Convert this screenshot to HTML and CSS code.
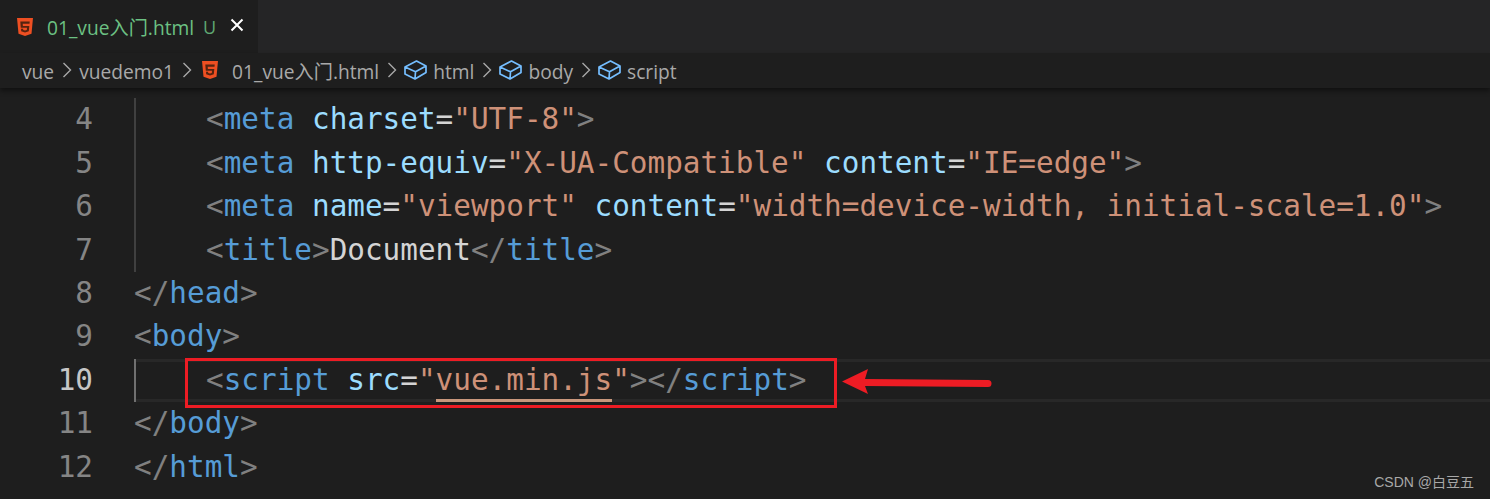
FILE: index.html
```html
<!DOCTYPE html>
<html lang="zh">
<head>
<meta charset="utf-8">
<title>01_vue入门.html</title>
<link rel="stylesheet" href="styles.css">
</head>
<body>
<svg class="defs" width="0" height="0" aria-hidden="true">
  <symbol id="h5" viewBox="0 0 16 18">
    <path d="M0 0h16l-1.500 15.800L8 18l-6.500-2.200z" fill="#ee4f22"/>
    <path d="M3.300 3.500h9.400l-.2 2.300H5.700l.2 2.300h6.400l-.5 5.200L8 14.500l-3.800-1.200-.2-2.600h2.100l.1 1.200 1.800.5 1.800-.5.2-2.100H3.800z" fill="#55230f"/>
  </symbol>
  <symbol id="cube" viewBox="0 0 23 20">
    <path d="M1 7 12.500 1 22 6v6.500L11 19 1 14zM1 7l10.500 4.800L22 6M11.500 11.800 11 19" fill="none" stroke="#75beff" stroke-width="1.700" stroke-linejoin="round"/>
  </symbol>
</svg>
<div class="tabbar">
  <div class="tab">
    <svg class="h5"><use href="#h5"/></svg>
    <span class="tab-name">01_vue入门.html</span>
    <span class="tab-status">U</span>
    <svg class="tab-close" viewBox="0 0 14 14"><path d="M1.500 1.500l11 11M12.500 1.500l-11 11" stroke="#fff" stroke-width="2" fill="none"/></svg>
  </div>
</div>
<nav class="crumbs">
  <span>vue</span>
  <svg class="chev" viewBox="0 0 10 16"><path d="M1.500 1l7 7-7 7" fill="none" stroke="#a8a8a8" stroke-width="1.400"/></svg>
  <span>vuedemo1</span>
  <svg class="chev" viewBox="0 0 10 16"><path d="M1.500 1l7 7-7 7" fill="none" stroke="#a8a8a8" stroke-width="1.400"/></svg>
  <svg class="h5 crumb-h5"><use href="#h5"/></svg>
  <span class="crumb-file">01_vue入门.html</span>
  <svg class="chev" viewBox="0 0 10 16"><path d="M1.500 1l7 7-7 7" fill="none" stroke="#a8a8a8" stroke-width="1.400"/></svg>
  <svg class="cube"><use href="#cube"/></svg>
  <span>html</span>
  <svg class="chev" viewBox="0 0 10 16"><path d="M1.500 1l7 7-7 7" fill="none" stroke="#a8a8a8" stroke-width="1.400"/></svg>
  <svg class="cube"><use href="#cube"/></svg>
  <span>body</span>
  <svg class="chev" viewBox="0 0 10 16"><path d="M1.500 1l7 7-7 7" fill="none" stroke="#a8a8a8" stroke-width="1.400"/></svg>
  <svg class="cube"><use href="#cube"/></svg>
  <span>script</span>
</nav>
<main class="editor">
  <div class="line"><span class="num">4</span><span class="guide"></span><span class="code"><i class="p">&lt;</i><i class="t">meta</i> <i class="a">charset</i><i class="e">=</i><i class="s">"UTF-8"</i><i class="p">&gt;</i></span></div>
  <div class="line"><span class="num">5</span><span class="guide"></span><span class="code"><i class="p">&lt;</i><i class="t">meta</i> <i class="a">http-equiv</i><i class="e">=</i><i class="s">"X-UA-Compatible"</i> <i class="a">content</i><i class="e">=</i><i class="s">"IE=edge"</i><i class="p">&gt;</i></span></div>
  <div class="line"><span class="num">6</span><span class="guide"></span><span class="code"><i class="p">&lt;</i><i class="t">meta</i> <i class="a">name</i><i class="e">=</i><i class="s">"viewport"</i> <i class="a">content</i><i class="e">=</i><i class="s">"width=device-width, initial-scale=1.0"</i><i class="p">&gt;</i></span></div>
  <div class="line"><span class="num">7</span><span class="guide"></span><span class="code"><i class="p">&lt;</i><i class="t">title</i><i class="p">&gt;</i><i class="e">Document</i><i class="p">&lt;/</i><i class="t">title</i><i class="p">&gt;</i></span></div>
  <div class="line"><span class="num">8</span><span class="code"><i class="p">&lt;/</i><i class="t">head</i><i class="p">&gt;</i></span></div>
  <div class="line"><span class="num">9</span><span class="code"><i class="p">&lt;</i><i class="t">body</i><i class="p">&gt;</i></span></div>
  <div class="line current"><span class="num">10</span><span class="guide"></span><span class="code"><i class="p">&lt;</i><i class="t">script</i> <i class="a">src</i><i class="e">=</i><i class="s">"<u class="warn">vue.min.js</u>"</i><i class="p">&gt;&lt;/</i><i class="t">script</i><i class="p">&gt;</i></span>
    <div class="redbox"></div>
    <svg class="arrow" viewBox="0 0 152 32"><path d="M2 15.500 28 3 25 13 148 14a3.500 3.500 0 0 1 0 7L25 20 28 28z" fill="#ed1c24"/></svg>
  </div>
  <div class="line"><span class="num">11</span><span class="code"><i class="p">&lt;/</i><i class="t">body</i><i class="p">&gt;</i></span></div>
  <div class="line"><span class="num">12</span><span class="code"><i class="p">&lt;/</i><i class="t">html</i><i class="p">&gt;</i></span></div>
  <div class="mark">CSDN @白豆五</div>
</main>
</body>
</html>
```
FILE: styles.css
```css
* { box-sizing: border-box; }
html, body { margin: 0; height: 100%; }
body { width: 1490px; height: 499px; overflow: hidden; background: #1e1e1e; font-family: "Open Sans", "Noto Sans CJK SC", sans-serif; display: flex; flex-direction: column; }
.defs { position: absolute; }
.tabbar { height: 53px; flex: none; background: #252526; display: flex; }
.tab { width: 258px; background: #1e1e1e; display: flex; align-items: center; padding: 0 0 0 17px; }
.h5 { width: 16px; height: 18px; flex: none; }
.tab-name { margin-left: 14px; color: #6cc183; font-size: 19.200px; white-space: nowrap; }
.tab-status { margin-left: 9px; color: #5fa872; font-size: 18px; }
.tab-close { width: 14px; height: 14px; margin-left: 14px; margin-top: -3px; }
.crumbs { height: 35px; flex: none; display: flex; align-items: center; padding: 1px 0 0 22px; background: #1e1e1e; color: #a9a9a9; font-size: 19.200px; white-space: nowrap; box-shadow: 0 3px 5px rgba(0,0,0,.45); position: relative; z-index: 1; }
.chev { width: 10px; height: 16px; margin: -3px 7px 0 8px; flex: none; }
.crumb-h5 { margin: -2px 0 0 3px; }
.crumb-file { margin-left: 14px; }
.cube { width: 23px; height: 20px; flex: none; margin: -3px 6px 0 0; }
.editor { flex: 1; padding-top: 10.400px; position: relative; font-family: "DejaVu Sans Mono", monospace; font-size: 29.330px; }
.line { height: 43.400px; display: flex; position: relative; white-space: pre; line-height: 43.400px; }
.num { width: 93px; text-align: right; color: #858585; flex: none; margin-right: 41px; }
.guide { width: 70.400px; margin-right: 1.600px; flex: none; border-left: 2px solid #404040; position: relative; z-index: 1; }
.code { color: #d4d4d4; position: relative; z-index: 1; }
.code i { font-style: normal; }
.p { color: #808080; }
.t { color: #569cd6; }
.a { color: #9cdcfe; }
.e { color: #d4d4d4; }
.s { color: #ce9178; }
.warn { text-decoration: none; border-bottom: 3px solid #c8977c; padding-bottom: 2px; }
.current::before { content: ""; position: absolute; left: 135px; right: 0; top: 0; bottom: 0; border-top: 3px solid #282828; border-bottom: 3px solid #282828; }
.current .num { color: #c6c6c6; }
.current .guide { border-left-color: #707070; }
.redbox { position: absolute; left: 185px; top: -1px; width: 652px; height: 50px; border: 3px solid #ed1c24; z-index: 2; }
.arrow { position: absolute; left: 840px; top: 7px; width: 152px; height: 32px; }
.mark { position: absolute; right: 16px; bottom: 8px; color: #a8a8a8; font-family: "Liberation Sans", "Noto Sans CJK SC", sans-serif; font-size: 14px; }
```
